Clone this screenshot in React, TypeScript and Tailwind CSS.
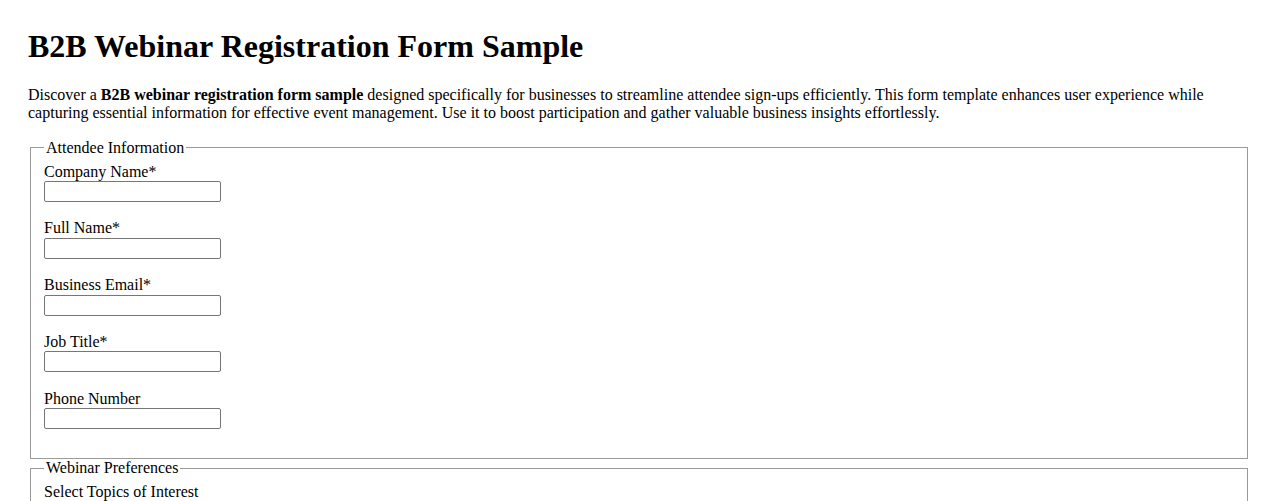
const attendeeFields = [
  { id: "company", label: "Company Name*" },
  { id: "fullName", label: "Full Name*" },
  { id: "email", label: "Business Email*" },
  { id: "jobTitle", label: "Job Title*" },
  { id: "phone", label: "Phone Number" },
];

function Field({ id, label }: { id: string; label: string }) {
  return (
    <div className="mb-[17.4px]">
      <label htmlFor={id} className="block leading-[18.4px]">
        {label}
      </label>
      <input
        id={id}
        type="text"
        className="block w-[177px] h-[21px] border border-[#767676] rounded-[2px] bg-white px-[2px] text-[13px]"
      />
    </div>
  );
}

export default function App() {
  return (
    <div
      className="bg-white text-black px-[28px] pt-[28px] pb-8 min-h-screen text-[16px] leading-[18.4px]"
      style={{ fontFamily: '"Liberation Serif", "Times New Roman", serif' }}
    >
      <h1 className="text-[32px] font-bold leading-[36.8px] mb-[21px]">
        B2B Webinar Registration Form Sample
      </h1>
      <p className="mb-4">
        Discover a <strong className="font-bold">B2B webinar registration form sample</strong> designed
        specifically for businesses to streamline attendee sign-ups efficiently. This form template
        enhances user experience while capturing essential information for effective event management.
        Use it to boost participation and gather valuable business insights effortlessly.
      </p>

      <form>
        <fieldset className="mx-[2px] border border-[#9a9a9a] px-[13px] pt-[5.6px] pb-[11.5px]">
          <legend className="px-[2px]">Attendee Information</legend>
          {attendeeFields.map((f) => (
            <Field key={f.id} id={f.id} label={f.label} />
          ))}
        </fieldset>

        <fieldset className="mx-[2px] border border-[#9a9a9a] px-[13px] pt-[5.6px] pb-[11.5px]">
          <legend className="px-[2px]">Webinar Preferences</legend>
          <div className="mb-[17.4px]">
            <span className="block">Select Topics of Interest</span>
          </div>
        </fieldset>
      </form>
    </div>
  );
}
